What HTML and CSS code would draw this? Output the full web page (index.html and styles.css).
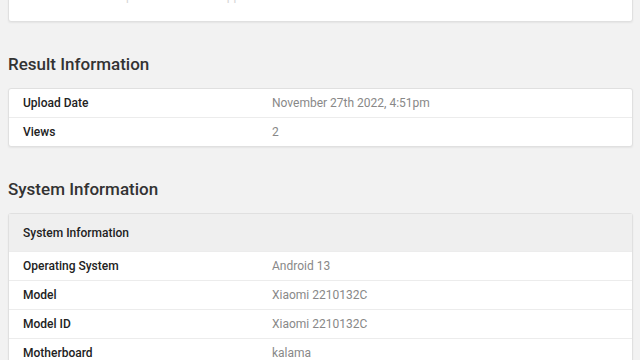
FILE: index.html
```html
<!DOCTYPE html>
<html lang="en">
<head>
    <meta charset="UTF-8">
    <meta name="viewport" content="width=device-width, initial-scale=1.0">
    <title>Xiaomi 2210132C - Benchmark Result</title>
    <link rel="stylesheet" href="styles.css">
</head>
<body>
    <div class="card card-top">
        <p class="card-note">Benchmark result uploaded from the app</p>
    </div>

    <h2 class="section-title">Result Information</h2>
    <div class="card">
        <div class="row">
            <div class="row-name">Upload Date</div>
            <div class="row-value">November 27th 2022, 4:51pm</div>
        </div>
        <div class="row">
            <div class="row-name">Views</div>
            <div class="row-value">2</div>
        </div>
    </div>

    <h2 class="section-title">System Information</h2>
    <div class="card">
        <div class="row row-head">
            <div class="row-name">System Information</div>
        </div>
        <div class="row">
            <div class="row-name">Operating System</div>
            <div class="row-value">Android 13</div>
        </div>
        <div class="row">
            <div class="row-name">Model</div>
            <div class="row-value">Xiaomi 2210132C</div>
        </div>
        <div class="row">
            <div class="row-name">Model ID</div>
            <div class="row-value">Xiaomi 2210132C</div>
        </div>
        <div class="row">
            <div class="row-name">Motherboard</div>
            <div class="row-value">kalama</div>
        </div>
    </div>
</body>
</html>
```

FILE: styles.css
```css
body {
    background-color: #f2f2f2;
    color: #222;
    font-family: Roboto, "Noto Sans", Arial, sans-serif;
    margin: 0;
    padding: 0 7px 0 8px;
}

.card {
    background-color: #fff;
    border: 1px solid #e0e0e0;
    border-radius: 3px;
    box-shadow: 0 1px 2px rgba(0, 0, 0, 0.06);
}

.card-top {
    margin-top: -26px;
    padding: 14px 14px 18px;
}

.card-note {
    margin: 0;
    font-size: 12px;
    line-height: 14px;
    color: #d6d6d6;
}

.section-title {
    font-size: 17px;
    font-weight: 500;
    color: #333;
    margin: 31px 0 13px;
    line-height: 22px;
}

.row {
    display: flex;
    align-items: center;
    height: 28px;
    border-top: 1px solid #ececec;
    font-size: 12px;
}

.row:first-child {
    border-top: none;
}

.row-head {
    height: 37px;
    background-color: #efefef;
}

.row-name {
    width: 249px;
    padding-left: 14px;
    font-weight: 500;
}

.row-value {
    color: #888;
}
```
